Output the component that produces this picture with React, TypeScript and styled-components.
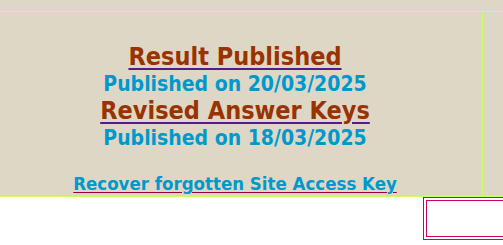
import styled, { createGlobalStyle } from "styled-components";

const GlobalStyle = createGlobalStyle`
  html, body {
    margin: 0;
    padding: 0;
    background: #ffffff;
  }
  body {
    font-family: "DejaVu Sans Condensed", "DejaVu Sans", sans-serif;
    overflow: hidden;
  }
`;

const Banner = styled.div`
  background-color: #dfd7c6;
  padding-top: 11px;
`;

const Row = styled.div`
  display: flex;
  border-top: 1px solid #ccff66;
  border-bottom: 1px solid #ccff66;
`;

const MainCell = styled.div`
  width: 483px;
  height: 184px;
  box-sizing: border-box;
  border-right: 1px solid #ccff66;
  padding: 31px 12px 0 0;
  display: flex;
  flex-direction: column;
  align-items: center;
  text-align: center;
  font-weight: bold;
`;

const SideCell = styled.div`
  flex: 1;
`;

const Notice = styled.div`
  display: flex;
  flex-direction: column;
  align-items: center;
`;

const Heading = styled.a`
  font-size: 25px;
  line-height: 28px;
  color: #993300;
  text-decoration: underline;
  text-decoration-color: #551a8b;
  text-decoration-thickness: 2px;
  text-underline-offset: 3px;
`;

const PublishedOn = styled.div`
  font-size: 21px;
  line-height: 26px;
  color: #0099cc;
`;

const Spacer = styled.div`
  height: 25px;
`;

const RecoverLink = styled.a`
  font-size: 18.5px;
  line-height: 24px;
  color: #0099cc;
  text-decoration: underline;
  text-decoration-color: #990033;
  text-decoration-thickness: 1px;
  text-underline-offset: 2px;
`;

const Footer = styled.div`
  display: flex;
  padding-left: 423px;
`;

const PinkBox = styled.div`
  flex: 1;
  height: 43px;
  box-sizing: border-box;
  border: 4px double #cc0066;
  border-right: none;
`;

const notices = [
  { title: "Result Published", date: "20/03/2025" },
  { title: "Revised Answer Keys", date: "18/03/2025" },
];

export default function App() {
  return (
    <>
      <GlobalStyle />
      <Banner>
        <Row>
          <MainCell>
            {notices.map((n) => (
              <Notice key={n.title}>
                <Heading href="#">{n.title}</Heading>
                <PublishedOn>Published on {n.date}</PublishedOn>
              </Notice>
            ))}
            <Spacer />
            <RecoverLink href="#">Recover forgotten Site Access Key</RecoverLink>
          </MainCell>
          <SideCell />
        </Row>
      </Banner>
      <Footer>
        <PinkBox />
      </Footer>
    </>
  );
}
